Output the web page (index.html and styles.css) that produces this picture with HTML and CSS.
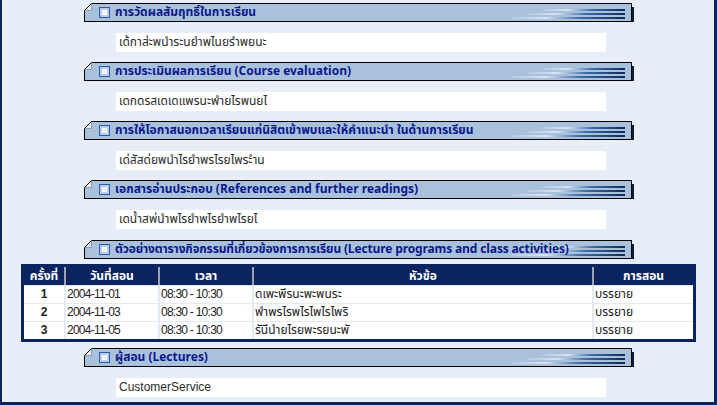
FILE: index.html
```html
<!DOCTYPE html>
<html>
<head>
<meta charset="utf-8">
<link rel="stylesheet" href="styles.css">
</head>
<body>
<div class="frame">
  <div class="sec">
    <div class="bar">
      <svg class="fold" width="8" height="8" viewBox="0 0 8 8"><path d="M0 0H8L0 8Z" fill="#e8eef7"/><path d="M0.5 7.5L7.5 0.5V7.5Z" fill="#e4ecf6" stroke="#8a9ab0" stroke-width="1"/><path d="M0.5 7.5L7.5 0.5" stroke="#000" stroke-width="1"/></svg>
      <span class="chk"></span><span class="title">การวัดผลสัมฤทธิ์ในการเรียน</span>
      <span class="lines"><i></i><i></i><i></i></span>
    </div>
    <div class="box">เด้กาส่ะพนำระนยำพไนยรำพยนะ</div>
  </div>
  <div class="sec">
    <div class="bar">
      <svg class="fold" width="8" height="8" viewBox="0 0 8 8"><path d="M0 0H8L0 8Z" fill="#e8eef7"/><path d="M0.5 7.5L7.5 0.5V7.5Z" fill="#e4ecf6" stroke="#8a9ab0" stroke-width="1"/><path d="M0.5 7.5L7.5 0.5" stroke="#000" stroke-width="1"/></svg>
      <span class="chk"></span><span class="title">การประเมินผลการเรียน (Course evaluation)</span>
      <span class="lines"><i></i><i></i><i></i></span>
    </div>
    <div class="box">เดกดรสเดเดแพรนะพำยไรพนยไ</div>
  </div>
  <div class="sec">
    <div class="bar">
      <svg class="fold" width="8" height="8" viewBox="0 0 8 8"><path d="M0 0H8L0 8Z" fill="#e8eef7"/><path d="M0.5 7.5L7.5 0.5V7.5Z" fill="#e4ecf6" stroke="#8a9ab0" stroke-width="1"/><path d="M0.5 7.5L7.5 0.5" stroke="#000" stroke-width="1"/></svg>
      <span class="chk"></span><span class="title">การให้โอกาสนอกเวลาเรียนแก่นิสิตเข้าพบและให้คำแนะนำ ในด้านการเรียน</span>
      <span class="lines"><i></i><i></i><i></i></span>
    </div>
    <div class="box">เด่สัสด่ยพนำไรยำพรไรยไพระำน</div>
  </div>
  <div class="sec">
    <div class="bar">
      <svg class="fold" width="8" height="8" viewBox="0 0 8 8"><path d="M0 0H8L0 8Z" fill="#e8eef7"/><path d="M0.5 7.5L7.5 0.5V7.5Z" fill="#e4ecf6" stroke="#8a9ab0" stroke-width="1"/><path d="M0.5 7.5L7.5 0.5" stroke="#000" stroke-width="1"/></svg>
      <span class="chk"></span><span class="title">เอกสารอ่านประกอบ (References and further readings)</span>
      <span class="lines"><i></i><i></i><i></i></span>
    </div>
    <div class="box">เดน้ำสพ่นำพไรยำพไรยำพไรยไ</div>
  </div>
  <div class="sec sec-wide">
    <div class="bar">
      <svg class="fold" width="8" height="8" viewBox="0 0 8 8"><path d="M0 0H8L0 8Z" fill="#e8eef7"/><path d="M0.5 7.5L7.5 0.5V7.5Z" fill="#e4ecf6" stroke="#8a9ab0" stroke-width="1"/><path d="M0.5 7.5L7.5 0.5" stroke="#000" stroke-width="1"/></svg>
      <span class="chk"></span><span class="title title-tight">ตัวอย่างตารางกิจกรรมที่เกี่ยวข้องการการเรียน (Lecture programs and class activities)</span>
      <span class="lines"><i></i><i></i><i></i></span>
    </div>
    <table class="sched">
      <colgroup><col class="c1"><col class="c2"><col class="c3"><col class="c4"><col class="c5"></colgroup>
      <thead>
        <tr><th>ครั้งที่</th><th>วันที่สอน</th><th>เวลา</th><th>หัวข้อ</th><th>การสอน</th></tr>
      </thead>
      <tbody>
        <tr><td class="num">1</td><td class="lat">2004-11-01</td><td class="lat">08:30 - 10:30</td><td class="thai">ดเพะพีรนะพะพนระ</td><td>บรรยาย</td></tr>
        <tr><td class="num">2</td><td class="lat">2004-11-03</td><td class="lat">08:30 - 10:30</td><td class="thai">พำพรไรพไรไพไรไพริ</td><td>บรรยาย</td></tr>
        <tr><td class="num">3</td><td class="lat">2004-11-05</td><td class="lat">08:30 - 10:30</td><td class="thai">รันีนำยไรยพะรยนะพั</td><td>บรรยาย</td></tr>
      </tbody>
    </table>
  </div>
  <div class="sec sec-last">
    <div class="bar">
      <svg class="fold" width="8" height="8" viewBox="0 0 8 8"><path d="M0 0H8L0 8Z" fill="#e8eef7"/><path d="M0.5 7.5L7.5 0.5V7.5Z" fill="#e4ecf6" stroke="#8a9ab0" stroke-width="1"/><path d="M0.5 7.5L7.5 0.5" stroke="#000" stroke-width="1"/></svg>
      <span class="chk"></span><span class="title">ผู้สอน (Lectures)</span>
      <span class="lines"><i></i><i></i><i></i></span>
    </div>
    <div class="box lat">CustomerService</div>
  </div>
</div>
</body>
</html>
```

FILE: styles.css
```css
html, body {
  margin: 0;
  padding: 0;
  background: #e8eef7;
}
body {
  font-family: Tahoma, "Noto Sans Thai", Loma, Garuda, "DejaVu Sans", sans-serif;
  font-size: 12px;
  overflow: hidden;
}
.frame {
  box-sizing: border-box;
  width: 717px;
  height: 405px;
  background: #e8eef7;
  border-left: 2px solid #0b2460;
  border-right: 3px solid #0b2460;
  border-bottom: 3px solid #0b2460;
  padding-top: 3px;
  display: flex;
  flex-direction: column;
  gap: 10px;
}
.sec {
  display: flex;
  flex-direction: column;
  gap: 11px;
}
.sec-wide {
  margin-top: 1px;
  gap: 5px;
}
.sec-last {
  margin-top: -4px;
}
.bar {
  position: relative;
  box-sizing: border-box;
  margin-left: 82px;
  width: 548px;
  height: 19px;
  background: #aac1dc;
  border: 1px solid #000;
  display: flex;
  align-items: center;
  padding-left: 14px;
  line-height: 17px;
}
.bar::after {
  content: "";
  position: absolute;
  right: -3px;
  top: 3px;
  bottom: -1px;
  width: 2px;
  background: #0e1c38;
}
.fold {
  position: absolute;
  left: -1px;
  top: -1px;
  display: block;
}
.chk {
  box-sizing: border-box;
  width: 11px;
  height: 11px;
  flex: none;
  border: 1px solid #2c5ca6;
  background: linear-gradient(135deg, #ffffff 0%, #dce7f5 100%);
  box-shadow: inset 0 0 0 2px #b9cde8, inset 0 0 0 3px #ffffff;
}
.title {
  margin-left: 5px;
  font-weight: bold;
  color: #0a178c;
  font-size: 12px;
  white-space: nowrap;
  position: relative;
  z-index: 2;
}
.title-tight {
  letter-spacing: -0.15px;
}
.lines {
  position: absolute;
  right: 6px;
  top: 5px;
  width: 113px;
  height: 11px;
  display: flex;
  flex-direction: column;
  align-items: flex-end;
  gap: 2px;
  z-index: 1;
}
.lines i {
  display: block;
  height: 2px;
  background: linear-gradient(to right, rgba(226,236,247,0.2) 0%, #d8e4f2 30%, #3e6ca8 60%, #0f2a55 100%);
}
.lines i:nth-child(1) { width: 82px; }
.lines i:nth-child(2) { width: 97px; }
.lines i:nth-child(3) { width: 113px; }
.box {
  box-sizing: border-box;
  margin-left: 114px;
  width: 490px;
  height: 19px;
  background: #fff;
  color: #2b2b2b;
  padding-left: 3px;
  line-height: 19px;
  font-size: 12px;
  white-space: nowrap;
}
.lat {
  font-family: "Liberation Sans", Arial, sans-serif;
}
.sched {
  margin-left: 19px;
  width: 675px;
  table-layout: fixed;
  border-collapse: separate;
  border-spacing: 0;
  border: 3px solid #0b2460;
  background: #fff;
}
.c1 { width: 40px; }
.c2 { width: 94px; }
.c3 { width: 94px; }
.c4 { width: 340px; }
.c5 { width: 101px; }
.sched th {
  background: #0b2460;
  color: #fff;
  font-weight: bold;
  font-size: 12px;
  height: 18px;
  line-height: 18px;
  padding: 0;
  text-align: center;
  border-left: 2px solid #9aa3b4;
  white-space: nowrap;
  overflow: hidden;
}
.sched th:first-child { border-left: none; }
.sched td {
  height: 17px;
  line-height: 17px;
  padding: 0 0 0 1px;
  border-top: 1px solid #e3eaf4;
  border-left: 2px solid #e3eaf4;
  font-size: 12px;
  color: #222;
  white-space: nowrap;
  overflow: hidden;
}
.sched td:first-child { border-left: none; }
.sched td.num {
  text-align: center;
  padding: 0;
  font-weight: bold;
  font-family: "Liberation Sans", Arial, sans-serif;
  font-size: 12px;
}
.sched td.lat {
  font-size: 12px;
  letter-spacing: -0.75px;
}
```
